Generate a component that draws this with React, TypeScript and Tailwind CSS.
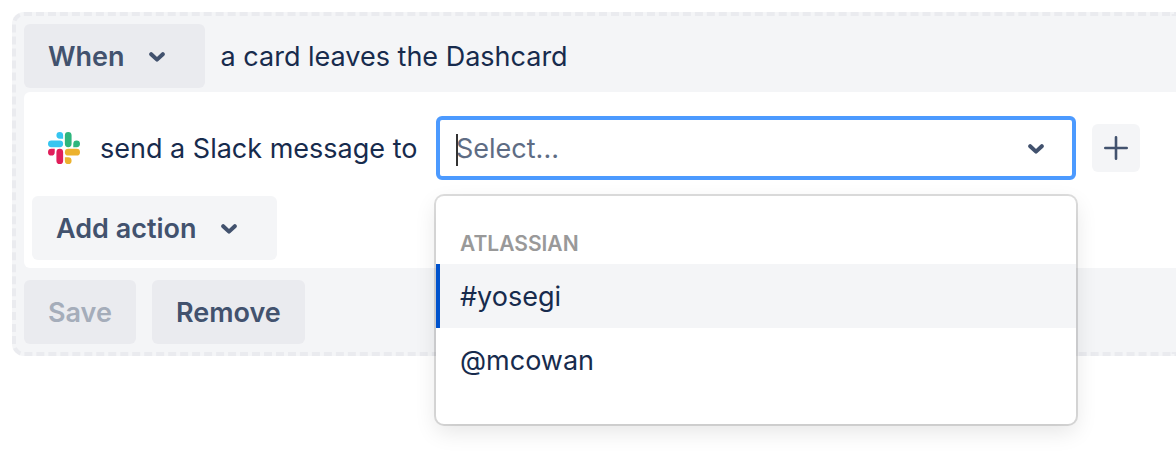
import React, { useState } from "react";
import { twMerge } from "tailwind-merge";

interface ButtonProps extends React.ButtonHTMLAttributes<HTMLButtonElement> {
  hasMenu?: boolean;
}

const Chevron: React.FC = () => (
  <svg width="16" height="12" viewBox="0 0 16 12" fill="none" aria-hidden="true" className="shrink-0">
    <path
      d="M2.2 3.2 8 8.6l5.8-5.4"
      stroke="#42526E"
      strokeWidth="4"
      strokeLinecap="round"
      strokeLinejoin="round"
    />
  </svg>
);

const SlackLogo: React.FC = () => (
  <svg width="32" height="32" viewBox="0 0 24 24" aria-hidden="true" className="shrink-0">
    <path
      fill="#E01E5A"
      d="M5.042 15.165a2.528 2.528 0 0 1-2.52 2.523A2.528 2.528 0 0 1 0 15.165a2.527 2.527 0 0 1 2.522-2.52h2.52v2.52zM6.313 15.165a2.527 2.527 0 0 1 2.521-2.52 2.527 2.527 0 0 1 2.521 2.52v6.313A2.528 2.528 0 0 1 8.834 24a2.528 2.528 0 0 1-2.521-2.522v-6.313z"
    />
    <path
      fill="#36C5F0"
      d="M8.834 5.042a2.528 2.528 0 0 1-2.521-2.52A2.528 2.528 0 0 1 8.834 0a2.528 2.528 0 0 1 2.521 2.522v2.52H8.834zM8.834 6.313a2.528 2.528 0 0 1 2.521 2.521 2.528 2.528 0 0 1-2.521 2.521H2.522A2.528 2.528 0 0 1 0 8.834a2.528 2.528 0 0 1 2.522-2.521h6.312z"
    />
    <path
      fill="#2EB67D"
      d="M18.956 8.834a2.528 2.528 0 0 1 2.522-2.521A2.528 2.528 0 0 1 24 8.834a2.528 2.528 0 0 1-2.522 2.521h-2.522V8.834zM17.688 8.834a2.528 2.528 0 0 1-2.523 2.521 2.527 2.527 0 0 1-2.52-2.521V2.522A2.527 2.527 0 0 1 15.165 0a2.528 2.528 0 0 1 2.523 2.522v6.312z"
    />
    <path
      fill="#ECB22E"
      d="M15.165 18.956a2.528 2.528 0 0 1 2.523 2.522A2.528 2.528 0 0 1 15.165 24a2.527 2.527 0 0 1-2.52-2.522v-2.522h2.52zM15.165 17.688a2.527 2.527 0 0 1-2.52-2.523 2.526 2.526 0 0 1 2.52-2.52h6.313A2.527 2.527 0 0 1 24 15.165a2.528 2.528 0 0 1-2.522 2.523h-6.313z"
    />
  </svg>
);

const Button: React.FC<ButtonProps> = ({ hasMenu = false, className, children, ...props }) => (
  <button
    type="button"
    className={twMerge(
      "flex h-16 shrink-0 items-center gap-6 rounded-md bg-[#EAEBEF] px-6 pt-0.5 font-semibold text-[#42526E] disabled:text-[#A5ADBA]",
      hasMenu && "pr-10",
      className
    )}
    {...props}
  >
    {children}
    {hasMenu && <Chevron />}
  </button>
);

const channels = ["#yosegi", "@mcowan"];

const ChannelSelect: React.FC = () => {
  const [value, setValue] = useState("");
  const [active, setActive] = useState(channels[0]);

  return (
    <div className="relative min-w-0 flex-1">
      <div className="flex h-16 items-center rounded-md border-4 border-[#4C9AFF] bg-white pt-0.5 pr-7 pl-4">
        <input
          id="channel"
          role="combobox"
          aria-expanded="true"
          aria-controls="channel-list"
          autoComplete="off"
          placeholder="Select..."
          value={value}
          onChange={(e) => setValue(e.target.value)}
          className="w-full min-w-0 flex-1 bg-transparent text-[#172B4D] caret-transparent outline-none placeholder:text-[#5E6C84]"
        />
        <Chevron />
        {!value && <span className="absolute top-[18px] left-5 h-8 w-0.5 bg-[#333333]" />}
      </div>

      {/* Dropdown */}
      <div
        id="channel-list"
        role="listbox"
        aria-label="Channels"
        className="absolute inset-x-0 top-20 z-10 rounded-lg bg-white pt-8 pb-8 shadow-[0_0_0_2px_rgba(0,0,0,0.13),0_8px_22px_rgba(0,0,0,0.1)]"
      >
        <div className="flex h-9 items-center px-6 pb-1 text-[21px] font-semibold text-[#999999]">
          ATLASSIAN
        </div>
        {channels.map((channel) => (
          <div
            key={channel}
            role="option"
            aria-selected={channel === active}
            onMouseEnter={() => setActive(channel)}
            onClick={() => setValue(channel)}
            className={twMerge(
              "flex h-16 cursor-pointer items-center border-l-4 border-transparent px-5 pt-0.5",
              channel === active && "border-[#0052CC] bg-[#F4F5F7]"
            )}
          >
            {channel}
          </div>
        ))}
      </div>
    </div>
  );
};

const App: React.FC = () => (
  <main className="bg-white pt-3 pb-24 pl-3 font-['Inter',sans-serif] text-[27px] leading-8 text-[#172B4D]">
    <section className="rounded-l-xl border-4 border-r-0 border-dashed border-[#EAEBEF] bg-[#F4F5F7] py-2 pl-2">
      <div className="flex items-center gap-4">
        <Button hasMenu>When</Button>
        <span className="pt-0.5">a card leaves the Dashcard</span>
      </div>

      <div className="mt-1 rounded-l-md bg-white pt-6 pb-2 pl-2">
        <div className="flex items-center gap-4 pr-9 pl-4">
          <div className="flex w-[372px] shrink-0 items-center gap-5">
            <SlackLogo />
            <label htmlFor="channel" className="pt-0.5 whitespace-nowrap">
              send a Slack message to
            </label>
          </div>
          <ChannelSelect />
          <button
            type="button"
            aria-label="Add"
            className="flex size-12 shrink-0 items-center justify-center rounded-md bg-[#F4F5F7]"
          >
            <svg width="24" height="24" viewBox="0 0 24 24" fill="none" aria-hidden="true">
              <path d="M12 1.3v21.4M1.3 12h21.4" stroke="#42526E" strokeWidth="2.6" strokeLinecap="round" />
            </svg>
          </button>
        </div>
        <Button hasMenu className="mt-4 bg-[#F4F5F7]">
          Add action
        </Button>
      </div>

      <div className="mt-3 flex gap-4">
        <Button disabled>Save</Button>
        <Button>Remove</Button>
      </div>
    </section>
  </main>
);

export default App;
